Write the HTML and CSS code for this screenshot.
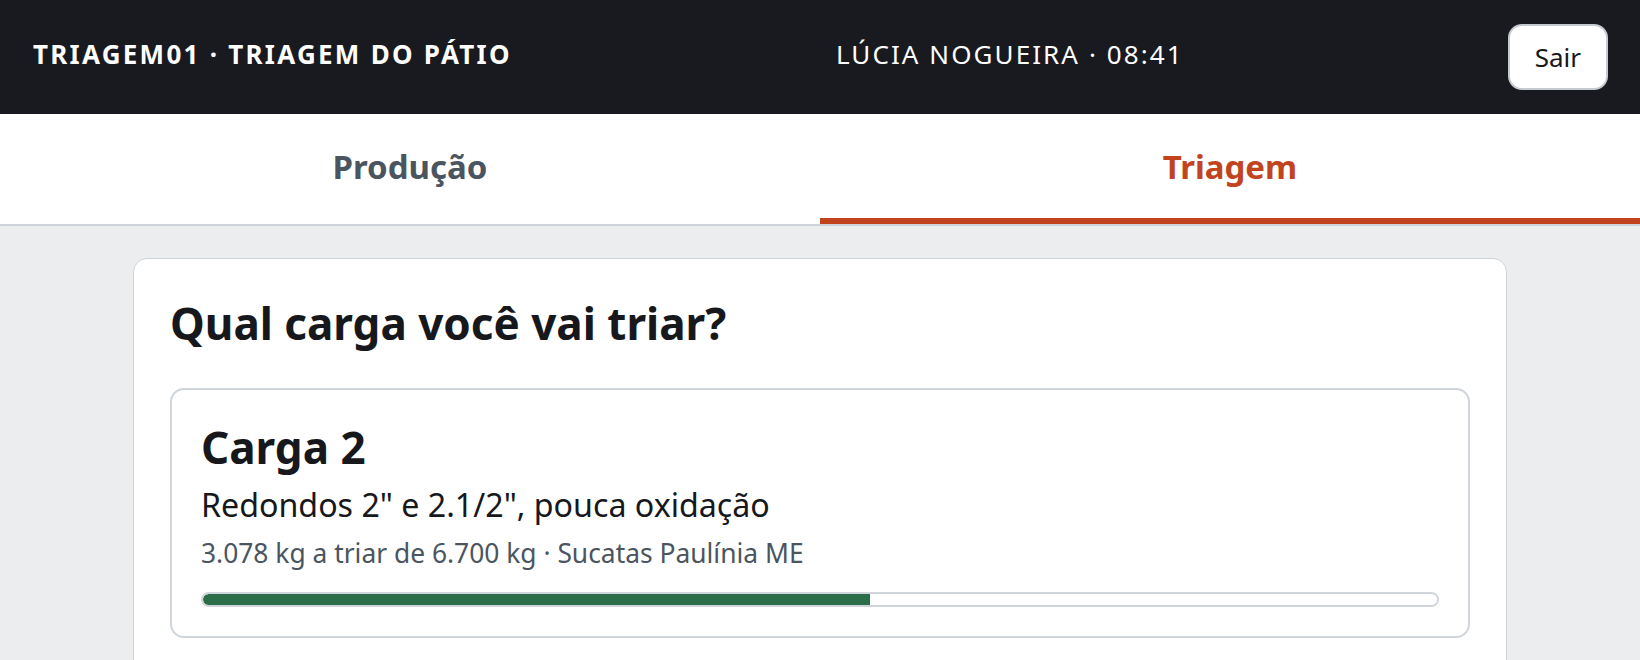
FILE: index.html
```html
<!DOCTYPE html>
<html lang="pt-BR">
<head>
<meta charset="utf-8">
<title>Triagem do Pátio</title>
<link rel="stylesheet" href="styles.css">
</head>
<body>
<div class="app">
  <header class="topbar">
    <div class="station">TRIAGEM01 · TRIAGEM DO PÁTIO</div>
    <div class="operator">LÚCIA NOGUEIRA · 08:41</div>
    <button class="logout" type="button">Sair</button>
  </header>
  <nav class="tabs">
    <button class="tab" type="button">Produção</button>
    <button class="tab tab-active" type="button">Triagem</button>
  </nav>
  <main class="content">
    <section class="panel">
      <h1 class="panel-title">Qual carga você vai triar?</h1>
      <div class="load-card">
        <h2 class="load-name">Carga 2</h2>
        <p class="load-desc">Redondos 2" e 2.1/2", pouca oxidação</p>
        <p class="load-meta">3.078 kg a triar de 6.700 kg · Sucatas Paulínia ME</p>
        <div class="progress"><div class="progress-fill" style="width: 54.06%"></div></div>
      </div>
    </section>
  </main>
</div>
</body>
</html>
```
FILE: styles.css
```css
* { box-sizing: border-box; }
html, body { margin: 0; padding: 0; }
body {
  font-family: "Noto Sans", "Open Sans", sans-serif;
  background: #ecedef;
  color: #16181c;
}
.app {
  height: 100vh;
  overflow: hidden;
  display: flex;
  flex-direction: column;
}
.topbar {
  height: 114px;
  flex: 0 0 auto;
  background: #181a1f;
  color: #ffffff;
  display: flex;
  align-items: center;
  justify-content: space-between;
  padding: 0 32px 0 33px;
}
.station {
  font-size: 26px;
  font-weight: 700;
  letter-spacing: 0.087em;
  line-height: 1;
  margin-bottom: 6px;
}
.operator {
  font-size: 26px;
  font-weight: 400;
  letter-spacing: 0.08em;
  line-height: 1;
  margin-bottom: 6px;
}
.logout {
  font-family: inherit;
  font-size: 26px;
  color: #16181c;
  background: #ffffff;
  border: 2px solid #c5cad0;
  border-radius: 14px;
  height: 66px;
  padding: 0 25px;
  cursor: pointer;
}
.tabs {
  flex: 0 0 auto;
  display: grid;
  grid-template-columns: 1fr 1fr;
  background: #ffffff;
  border-bottom: 2px solid #cdd3d9;
}
.tab {
  font-family: inherit;
  font-size: 33px;
  font-weight: 700;
  color: #4a5560;
  background: transparent;
  border: 0;
  border-bottom: 6px solid transparent;
  height: 110px;
  padding: 0;
  cursor: pointer;
}
.tab-active {
  color: #c2441f;
  border-bottom-color: #c2441f;
}
.content {
  flex: 1 1 auto;
  padding: 32px 0 0;
}
.panel {
  max-width: 1374px;
  margin: 0 auto;
  background: #ffffff;
  border: 1px solid #cdd3d9;
  border-radius: 14px;
  padding: 36px 36px 40px;
}
.panel-title {
  margin: 0 0 36px;
  font-size: 44px;
  font-weight: 700;
  line-height: 1.3;
}
.load-card {
  border: 2px solid #cfd5db;
  border-radius: 14px;
  padding: 27px 29px 29px;
}
.load-name {
  margin: 0;
  font-size: 44px;
  font-weight: 700;
  line-height: 60px;
}
.load-desc {
  margin: 5px 0 0;
  font-size: 32.2px;
  line-height: 45px;
}
.load-meta {
  margin: 8px 0 0;
  font-size: 26.4px;
  line-height: 36px;
  color: #4a5560;
}
.progress {
  margin-top: 21px;
  height: 15px;
  border: 2px solid #cfd5db;
  border-radius: 8px;
  background: #ffffff;
  overflow: hidden;
}
.progress-fill {
  height: 100%;
  background: #2d6e4a;
  border-radius: 6px 0 0 6px;
}
```
